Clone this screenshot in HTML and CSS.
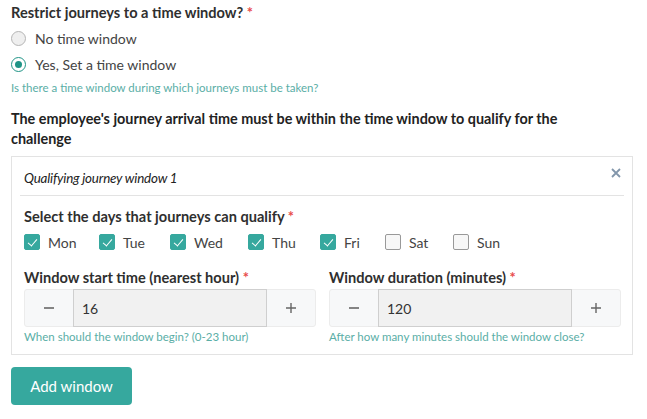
FILE: index.html
```html
<!DOCTYPE html>
<html lang="en">
<head>
  <meta charset="UTF-8">
  <title>Time window</title>
  <meta name="viewport" content="width=device-width, initial-scale=1">
  <link rel="stylesheet" href="styles.css">
</head>
<body>
  <div class="page">
    <div class="field">
      <div class="label">Restrict journeys to a time window? <span class="req">*</span></div>
      <label class="radio"><span class="dot"></span>No time window</label>
      <label class="radio"><span class="dot on"></span>Yes, Set a time window</label>
      <div class="help">Is there a time window during which journeys must be taken?</div>
    </div>

    <p class="intro">The employee's journey arrival time must be within the time window to qualify for the challenge</p>

    <div class="window">
      <div class="window-head">
        <span class="window-title">Qualifying journey window 1</span>
        <svg class="close" width="10" height="10" viewBox="0 0 10 10"><path d="M1 1L9 9M9 1L1 9" stroke="#8296ab" stroke-width="1.8" fill="none"/></svg>
      </div>

      <div class="label">Select the days that journeys can qualify <span class="req">*</span></div>
      <div class="days">
        <label class="check"><span class="box on"></span>Mon</label>
        <label class="check"><span class="box on"></span>Tue</label>
        <label class="check"><span class="box on"></span>Wed</label>
        <label class="check"><span class="box on"></span>Thu</label>
        <label class="check"><span class="box on"></span>Fri</label>
        <label class="check"><span class="box"></span>Sat</label>
        <label class="check"><span class="box"></span>Sun</label>
      </div>

      <div class="cols">
        <div class="col">
          <div class="label">Window start time (nearest hour) <span class="req">*</span></div>
          <div class="stepper">
            <span class="step"><svg width="12" height="12" viewBox="0 0 12 12"><path d="M1 6H11" stroke="#666" stroke-width="1.6"/></svg></span>
            <span class="value">16</span>
            <span class="step"><svg width="12" height="12" viewBox="0 0 12 12"><path d="M1 6H11M6 1V11" stroke="#666" stroke-width="1.4"/></svg></span>
          </div>
          <div class="help">When should the window begin? (0-23 hour)</div>
        </div>
        <div class="col">
          <div class="label">Window duration (minutes) <span class="req">*</span></div>
          <div class="stepper">
            <span class="step"><svg width="12" height="12" viewBox="0 0 12 12"><path d="M1 6H11" stroke="#666" stroke-width="1.6"/></svg></span>
            <span class="value">120</span>
            <span class="step"><svg width="12" height="12" viewBox="0 0 12 12"><path d="M1 6H11M6 1V11" stroke="#666" stroke-width="1.4"/></svg></span>
          </div>
          <div class="help">After how many minutes should the window close?</div>
        </div>
      </div>
    </div>

    <button class="add">Add window</button>
  </div>
</body>
</html>
```

FILE: styles.css
```css
body {
  margin: 0;
  background: #fff;
  font-family: Lato, "Open Sans", sans-serif;
  color: #333;
}
.page {
  padding: 4px 14px 0 11px;
}
.label {
  font-weight: bold;
  font-size: 14.6px;
  color: #2f2f2f;
  line-height: 18px;
  margin-bottom: 3px;
}
.req {
  color: #e84a4a;
}
.radio {
  display: flex;
  align-items: center;
  gap: 9px;
  font-size: 14px;
  height: 26px;
  color: #444;
}
.dot {
  width: 13px;
  height: 13px;
  border: 1px solid #b5b5b5;
  border-radius: 50%;
  background: #efefef;
  box-sizing: content-box;
  position: relative;
}
.dot.on {
  border-color: #1f9486;
  background: #fff;
}
.dot.on::after {
  content: "";
  position: absolute;
  left: 3px;
  top: 3px;
  width: 7px;
  height: 7px;
  border-radius: 50%;
  background: #1f9486;
}
.help {
  font-size: 11.5px;
  line-height: 15px;
  color: #5aaea6;
  margin-top: 3px;
}
.intro {
  font-weight: bold;
  font-size: 14.4px;
  line-height: 20px;
  color: #222;
  max-width: 600px;
  margin: 14px 0 7px;
}
.window {
  border: 1px solid #e3e3e3;
  padding: 0 11px 10px 12px;
}
.window-head {
  display: flex;
  justify-content: space-between;
  align-items: flex-start;
  border-bottom: 1px solid #e3e3e3;
  margin: 0 -3px 12px -4px;
  padding: 11px 0 7px 4px;
}
.window-title {
  font-style: italic;
  font-size: 13.4px;
  letter-spacing: -0.2px;
  color: #222;
  line-height: 20px;
}
.close {
  margin-top: 0;
  margin-right: 3px;
}
.days {
  display: flex;
  margin: 5px 0 16px;
}
.check {
  display: flex;
  align-items: center;
  gap: 8px;
  font-size: 14px;
  color: #444;
  height: 22px;
}
.check:nth-child(1) { width: 75px; }
.check:nth-child(2) { width: 71px; }
.check:nth-child(3) { width: 78px; }
.check:nth-child(4) { width: 72px; }
.check:nth-child(5) { width: 65px; }
.check:nth-child(6) { width: 68px; }
.box {
  width: 14px;
  height: 14px;
  border: 1px solid #999;
  border-radius: 2px;
  background: #f7f7f7;
  box-sizing: content-box;
  position: relative;
}
.box.on {
  border-color: #36a89e;
  background: #36a89e;
}
.box.on::after {
  content: "";
  position: absolute;
  left: 5px;
  top: 2px;
  width: 4px;
  height: 8px;
  border: solid #fff;
  border-width: 0 1px 1px 0;
  transform: rotate(40deg);
}
.cols {
  display: grid;
  grid-template-columns: 1fr 1fr;
  gap: 13px;
}
.col .label {
  margin-bottom: 2px;
}
.col .help {
  margin-top: 2px;
}
.stepper {
  display: flex;
  height: 36px;
  border: 1px solid #ececec;
  border-radius: 3px;
  background: #f7f8f9;
}
.step {
  width: 48px;
  display: flex;
  align-items: center;
  justify-content: center;
}
.value {
  flex: 1;
  display: flex;
  align-items: center;
  padding-left: 8px;
  background: #f1f1f1;
  border: 1px solid #cfcfcf;
  margin: -1px 0;
  font-size: 14px;
  color: #333;
}
.add {
  margin-top: 12px;
  background: #36a89e;
  color: #fff;
  border: none;
  border-radius: 4px;
  width: 121px;
  height: 38px;
  font-family: inherit;
  font-size: 15px;
  cursor: pointer;
}
```
